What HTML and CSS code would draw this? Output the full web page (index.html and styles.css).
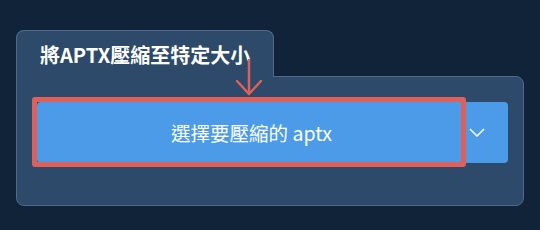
FILE: index.html
```html
<!DOCTYPE html>
<html lang="zh-Hant">
<head>
    <meta charset="UTF-8">
    <meta name="viewport" content="width=device-width, initial-scale=1.0">
    <title>將APTX壓縮至特定大小</title>
    <link rel="stylesheet" href="styles.css">
</head>
<body>
    <div class="card">
        <div class="tab">
            <h2>將APTX壓縮至特定大小</h2>
        </div>
        <div class="panel">
            <div class="picker">
                <button class="pickMain">選擇要壓縮的 aptx<span class="hintBox"></span></button>
                <button class="pickMore" aria-label="更多">
                    <svg width="16" height="9" viewBox="0 0 16 9"><polyline points="1,1 8,8 15,1" fill="none" stroke="#fff" stroke-width="1.5"/></svg>
                </button>
            </div>
        </div>
        <!-- hint arrow pointing at the button -->
        <svg class="hintArrow" width="30" height="38" viewBox="0 0 30 38">
            <line x1="14" y1="1" x2="14" y2="35" stroke="#df605b" stroke-width="2.5" stroke-linecap="round"/>
            <polyline points="2,22 14,35 26,22" fill="none" stroke="#df605b" stroke-width="2.5" stroke-linecap="round" stroke-linejoin="round"/>
        </svg>
    </div>
</body>
</html>
```

FILE: styles.css
```css
body {
    margin: 0;
    background-color: #112338;
    font-family: "Noto Sans CJK TC", "Noto Sans", sans-serif;
}
.card {
    position: relative;
    width: 508px;
    margin: 30px 0 0 16px;
}
.tab {
    position: relative;
    z-index: 1;
    display: inline-block;
    height: 46px;
    padding: 0 23px;
    margin-bottom: -1px;
    background: #2d4a6a;
    border: 1px solid #51698b;
    border-bottom: none;
    border-radius: 8px 8px 0 0;
}
.tab h2 {
    margin: 0;
    line-height: 48px;
    font-size: 20px;
    font-weight: bold;
    color: white;
}
.panel {
    background: #2d4a6a;
    border: 1px solid #51698b;
    border-radius: 0 8px 8px 8px;
    padding: 25px 15px 42px 20px;
}
.picker {
    display: flex;
    height: 61px;
}
button {
    font-family: inherit;
    border: none;
    background-color: #4c9be8;
    color: white;
    cursor: pointer;
    padding: 0;
}
.pickMain {
    position: relative;
    flex: 1;
    font-size: 19.5px;
    border-radius: 4px 0 0 4px;
}
.pickMore {
    width: 42px;
    border-radius: 0 4px 4px 0;
    display: flex;
    align-items: center;
    padding-left: 3px;
}
.hintBox {
    position: absolute;
    top: -5px;
    left: -5px;
    right: 0;
    bottom: -4px;
    border: 5px solid #df605b;
    border-radius: 3px;
}
.hintArrow {
    position: absolute;
    left: 219px;
    top: 29px;
    z-index: 2;
}
```
